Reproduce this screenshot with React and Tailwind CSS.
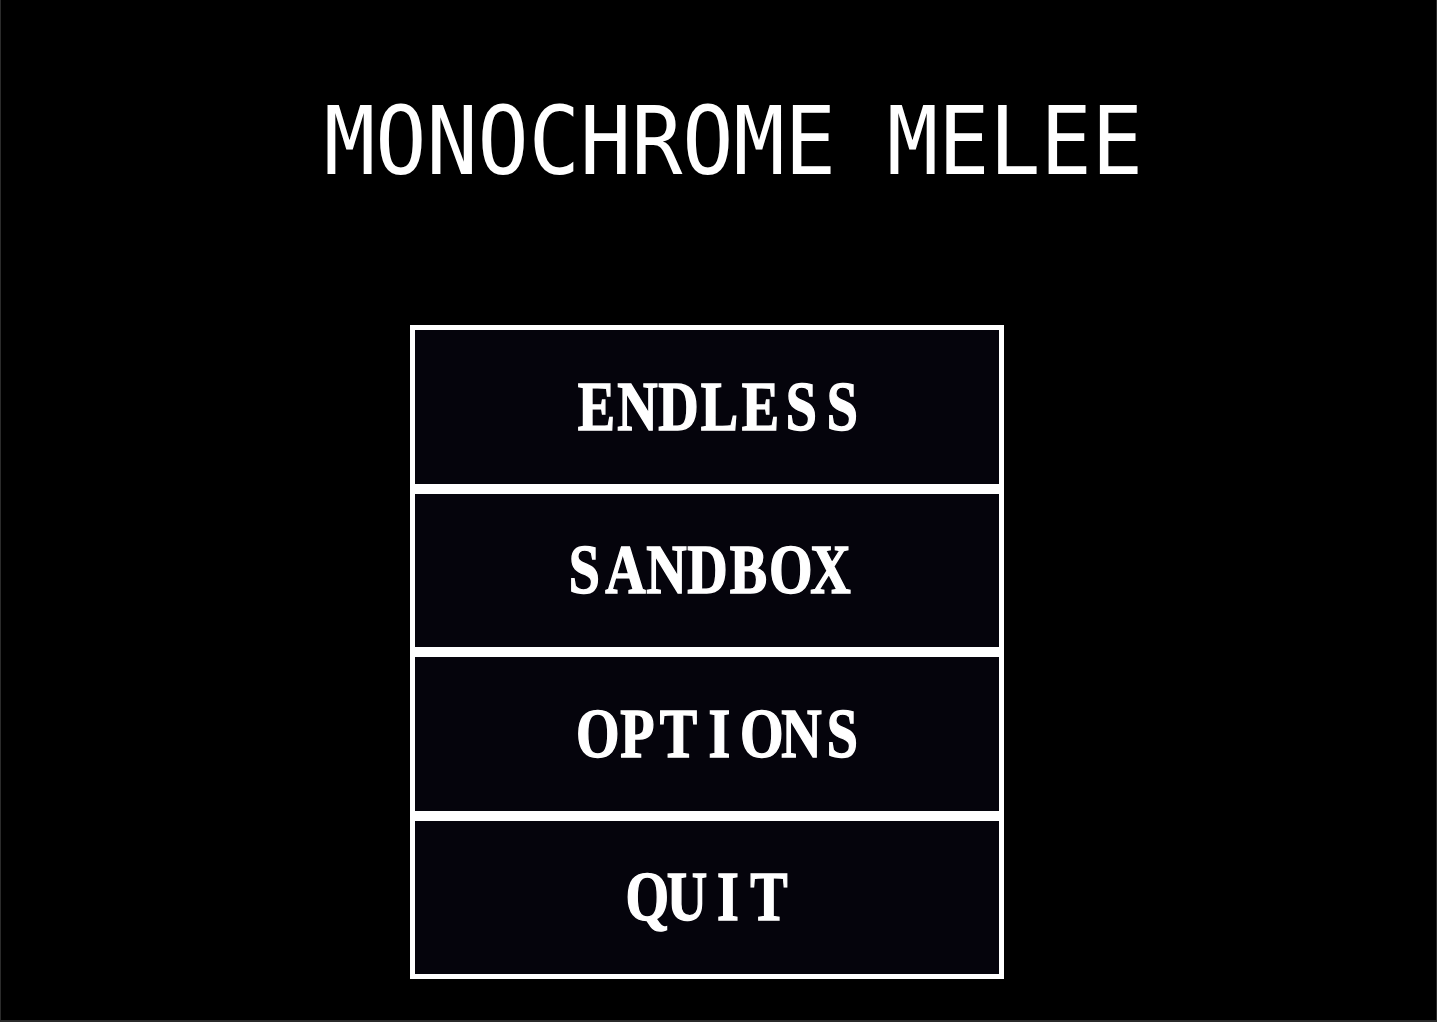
import React from "react";

const MENU_ITEMS = [
  { label: "ENDLESS", offset: "pl-[24px]" },
  { label: "SANDBOX", offset: "" },
  { label: "OPTIONS", offset: "pl-[24px]" },
  { label: "QUIT", offset: "" },
];

// fixed-width cells so the serif face lines up like a bitmap font
function MonoWord({ text }) {
  return (
    <span className="flex scale-x-[0.8] font-['Liberation_Serif',serif] font-bold text-[70px] leading-none text-white [-webkit-text-stroke:1.5px_white]">
      {text.split("").map((ch, i) => (
        <span key={i} className="w-[51.25px] text-center">
          {ch}
        </span>
      ))}
    </span>
  );
}

function MenuButton({ label, offset }) {
  return (
    <button className={`h-[163.5px] w-full border-[5px] border-white bg-[#05040c] flex items-center justify-center cursor-pointer ${offset}`}>
      <MonoWord text={label} />
    </button>
  );
}

export default function App() {
  return (
    <div className="h-[1022px] bg-black flex flex-col items-center border-x border-b-2 border-[#2b2b2b]">
      <div className="h-[280px] flex items-center">
        <h1 className="font-['DejaVu_Sans_Mono',monospace] text-[85px] leading-none text-white scale-y-[1.12] pl-[30px]">
          MONOCHROME MELEE
        </h1>
      </div>
      <div className="mt-[45px] mr-[23px] w-[594px] flex flex-col">
        {MENU_ITEMS.map((item) => (
          <MenuButton key={item.label} label={item.label} offset={item.offset} />
        ))}
      </div>
    </div>
  );
}
